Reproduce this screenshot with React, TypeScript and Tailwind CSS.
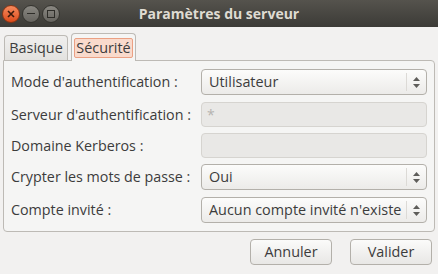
const font = { fontFamily: '"Open Sans", "DejaVu Sans", sans-serif' };

function Spin() {
  return (
    <div className="flex h-full items-center">
      <div className="h-[18px] w-px bg-[#dcdad6]" />
      <div className="flex w-[19px] flex-col items-center gap-[3px]">
        <svg width="7" height="4" viewBox="0 0 7 4"><path d="M3.5 0 L7 4 L0 4 Z" fill="#5e5d5a" /></svg>
        <svg width="7" height="4" viewBox="0 0 7 4"><path d="M0 0 L7 0 L3.5 4 Z" fill="#5e5d5a" /></svg>
      </div>
    </div>
  );
}

function Combo({ value }: { value: string }) {
  return (
    <div className="flex h-[26px] items-center rounded-[4px] border border-[#b3b0aa] bg-gradient-to-b from-[#fcfcfb] to-[#ecebe9] pl-[7px]">
      <span className="flex-1 overflow-hidden whitespace-nowrap text-[14.4px] text-[#3c3c3c]">{value}</span>
      <Spin />
    </div>
  );
}

function Entry({ value }: { value?: string }) {
  return (
    <div className="flex h-[25px] items-center rounded-[4px] border border-[#d6d4d0] bg-[#e9e8e6] pl-[5px] text-[14px] text-[#b5b3af]">
      {value}
    </div>
  );
}

const rows: { label: string; kind: 'combo' | 'entry'; value?: string; gap: string }[] = [
  { label: "Mode d'authentification :", kind: 'combo', value: 'Utilisateur', gap: 'mb-[7px]' },
  { label: "Serveur d'authentification :", kind: 'entry', value: '*', gap: 'mb-[6px]' },
  { label: 'Domaine Kerberos :', kind: 'entry', gap: 'mb-[6px]' },
  { label: 'Crypter les mots de passe :', kind: 'combo', value: 'Oui', gap: 'mb-[7px]' },
  { label: 'Compte invité :', kind: 'combo', value: "Aucun compte invité n'existe", gap: '' },
];

export default function App() {
  return (
    <div className="flex h-[274px] w-[438px] flex-col bg-[#f2f1f0]" style={font}>
      {/* Title bar */}
      <div className="grid h-[27px] grid-cols-[1fr_auto_1fr] items-center bg-gradient-to-b from-[#55534d] to-[#3c3b37]">
        <div className="flex items-center gap-[2px] pl-[2px]">
          <div className="flex h-[18px] w-[18px] items-center justify-center rounded-full border border-[#8a3514] bg-gradient-to-b from-[#f58a5c] to-[#dc4a17]">
            <svg width="8" height="8" viewBox="0 0 8 8"><path d="M1 1 L7 7 M7 1 L1 7" stroke="#3a1a0c" strokeWidth="1.6" /></svg>
          </div>
          <div className="flex h-[18px] w-[18px] items-center justify-center rounded-full border border-[#35342f] bg-gradient-to-b from-[#8a8882] to-[#66645f]">
            <div className="h-[1.5px] w-[8px] bg-[#2e2d29]" />
          </div>
          <div className="flex h-[18px] w-[18px] items-center justify-center rounded-full border border-[#35342f] bg-gradient-to-b from-[#8a8882] to-[#66645f]">
            <div className="h-[8px] w-[8px] border-[1.5px] border-[#2e2d29]" />
          </div>
        </div>
        <div className="text-[14px] font-bold text-[#dfdbd2]">Paramètres du serveur</div>
        <div />
      </div>

      <div className="px-[3px] pt-[6px]">
        {/* Tabs */}
        <div className="relative z-10 flex h-[28px] items-end gap-[3px] pl-[1px]">
          <div className="mb-[1px] flex h-[25px] w-[64px] items-center justify-center rounded-t-[4px] border border-b-0 border-[#bdbab5] bg-gradient-to-b from-[#f0efee] to-[#e3e2df] text-[14.4px] text-[#3c3c3c]">
            Basique
          </div>
          <div className="flex h-[28px] w-[65px] items-center justify-center rounded-t-[4px] border border-b-0 border-[#bdbab5] bg-[#f5f5f4]">
            <span className="rounded-[2px] border border-[#eba083] bg-[#f9dacc] px-[1px] text-[14.4px] leading-[18px] text-[#3c3c3c]">
              Sécurité
            </span>
          </div>
        </div>

        {/* Panel */}
        <div className="-mt-[1px] rounded-b-[4px] rounded-tr-[4px] border border-[#bdbab5] bg-[#f5f5f4] pb-[8px] pl-[7px] pr-[7px] pt-[8px]">
          {rows.map(r => (
            <div key={r.label} className={`grid grid-cols-[190px_1fr] items-center ${r.gap}`}>
              <span className="whitespace-nowrap text-[14.3px] text-[#3c3c3c]">{r.label}</span>
              {r.kind === 'combo' ? <Combo value={r.value!} /> : <Entry value={r.value} />}
            </div>
          ))}
        </div>
      </div>

      {/* Buttons */}
      <div className="mt-[7px] flex justify-end gap-[18px] pr-[6px]">
        {['Annuler', 'Valider'].map(b => (
          <button
            key={b}
            className="flex h-[26px] w-[82px] items-center justify-center rounded-[4px] border border-[#b3b0aa] bg-gradient-to-b from-[#fbfbfa] to-[#e8e7e5] text-[14.4px] text-[#3c3c3c]"
          >
            {b}
          </button>
        ))}
      </div>
    </div>
  );
}
